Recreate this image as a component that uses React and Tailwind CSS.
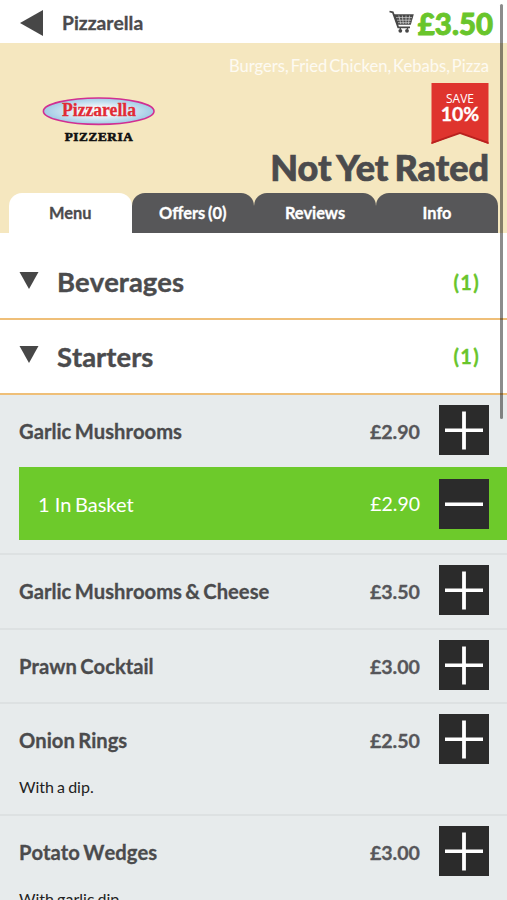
import React, { useState } from "react";

const tabs = [
  { name: "Menu", width: "w-[122.5px]" },
  { name: "Offers (0)", width: "w-[122.5px]" },
  { name: "Reviews", width: "w-[122px]" },
  { name: "Info", width: "w-[122px]" },
];

const starters = [
  { name: "Garlic Mushrooms", price: "£2.90", inBasket: 1 },
  { name: "Garlic Mushrooms & Cheese", price: "£3.50" },
  { name: "Prawn Cocktail", price: "£3.00" },
  { name: "Onion Rings", price: "£2.50", description: "With a dip." },
  { name: "Potato Wedges", price: "£3.00", description: "With garlic dip." },
];

const CartIcon = () => (
  <svg width="26" height="24" viewBox="0 0 26 24" fill="none">
    <path d="M0.5 1.5 L3.8 2.3 L9.2 17.3 H21" stroke="#474747" strokeWidth="1.8" />
    <path d="M4.6 4.3 H24.8 L21.8 14.8 H8.3 Z" fill="#474747" />
    <path
      d="M7 7.6 H23 M8 10.2 H22.3 M9 12.7 H21.5 M9.8 5.5 L11.8 14 M13.3 5.5 L14.3 14 M17 5.5 V14 M20.6 5.5 L19.4 14"
      stroke="#d8d8d8"
      strokeWidth="0.7"
    />
    <path d="M11.3 17 V19.5 M18.5 17 V19.5" stroke="#474747" strokeWidth="1.4" />
    <circle cx="11.3" cy="20.8" r="1.9" fill="#474747" />
    <circle cx="18" cy="20.8" r="1.9" fill="#474747" />
  </svg>
);

const Logo = () => (
  <svg width="114" height="48" viewBox="0 0 114 48">
    <defs>
      <radialGradient id="logoFill">
        <stop offset="0.3" stopColor="#f4f8fb" />
        <stop offset="1" stopColor="#9fcbe5" />
      </radialGradient>
    </defs>
    <ellipse cx="56.7" cy="14.2" rx="55.3" ry="13.2" fill="url(#logoFill)" stroke="#d12f92" strokeWidth="1.6" />
    <text
      x="57"
      y="19"
      textAnchor="middle"
      textLength="74"
      lengthAdjust="spacingAndGlyphs"
      className="font-['Liberation_Serif',serif] font-bold text-[18.5px]"
      fill="#e22b35"
      stroke="#e22b35"
      strokeWidth="0.3"
    >
      Pizzarella
    </text>
    <text
      x="56.7"
      y="44.3"
      textAnchor="middle"
      textLength="68"
      className="font-['Liberation_Serif',serif] font-bold text-[13.2px]"
      fill="#111"
      stroke="#111"
      strokeWidth="0.6"
    >
      PIZZERIA
    </text>
  </svg>
);

const SaveRibbon = () => (
  <div className="relative w-[58px] h-[61px]">
    <svg width="58" height="61" viewBox="0 0 58 61" className="block">
      <path d="M0.5 0 H57.5 V61 L29 50 L0.5 61 Z" fill="#df342e" />
      <path d="M0.5 59 L29 49 L57.5 59 V61 L29 51 L0.5 61 Z" fill="#b9221f" />
    </svg>
    <div className="absolute inset-x-0 top-[8px] text-center text-white">
      <div className="font-['Open_Sans',sans-serif] text-[12px] leading-[15px] font-medium">SAVE</div>
      <div className="text-[19.5px] leading-[16px] font-bold [-webkit-text-stroke:0.3px]">10%</div>
    </div>
  </div>
);

const SquareButton = ({ type, onClick }) => (
  <button onClick={onClick} aria-label={type} className="size-[50px] bg-[#2b2b2b] shrink-0">
    <svg width="50" height="50" viewBox="0 0 50 50">
      <path d="M6 25.2 H44" stroke="white" strokeWidth="3.4" />
      {type === "add" && <path d="M25 6.5 V44.5" stroke="white" strokeWidth="3.8" />}
    </svg>
  </button>
);

const CategoryRow = ({ name, count }) => (
  <div className="flex items-center h-[74.6px] border-b-2 border-[#efbf78] bg-white pl-[19px] pr-[27px] font-bold">
    <svg width="20" height="17" viewBox="0 0 20 17" className="-mt-[3px]">
      <path d="M0.5 0 H19.5 L10 17 Z" fill="#474747" />
    </svg>
    <h2 className="ml-[18px] grow text-[27.4px] [-webkit-text-stroke:0.4px] [font-kerning:none]">{name}</h2>
    <span className="text-[20px] tracking-[1.3px] text-[#69c52b] [-webkit-text-stroke:0.3px]">({count})</span>
  </div>
);

const MenuItem = ({ item }) => (
  <div className="border-t-2 border-[#dde1e2] first:border-t-0">
    <div className="flex items-start h-[72.6px] pt-[10px] pl-[19px] pr-[18px] text-[20px] leading-[53px] font-bold [-webkit-text-stroke:0.3px]">
      <h3 className="grow text-[20.2px] [font-kerning:none] [word-spacing:-1.5px]">{item.name}</h3>
      <span className="mr-[19px] text-[19.6px] text-[#56565a]">{item.price}</span>
      <SquareButton type="add" />
    </div>
    {item.inBasket && (
      <div className="flex items-center h-[73px] ml-[19px] mb-[12.6px] pl-[19px] pr-[18px] bg-[#6dca2b] text-white text-[20px]">
        <span className="grow">
          {item.inBasket} <span className="[word-spacing:-1.5px]">In Basket</span>
        </span>
        <span className="mr-[19px] text-[19.5px]">{item.price}</span>
        <SquareButton type="remove" />
      </div>
    )}
    {item.description && (
      <p className="h-[37.6px] pl-[19px] text-[16px] leading-[19px] text-[#222] [word-spacing:-1px]">
        {item.description}
      </p>
    )}
  </div>
);

const App = () => {
  const [activeTab, setActiveTab] = useState("Menu");

  return (
    <div className="relative w-[507px] h-[900px] overflow-hidden bg-white font-['Lato',sans-serif] text-[#4b4b4d]">
      <header className="flex items-center h-[43px] pl-[20px] pr-[14px]">
        <svg width="23" height="26" viewBox="0 0 23 26" className="mt-[2px]">
          <path d="M0 13 L23 0 V26 Z" fill="#474747" />
        </svg>
        <h1 className="ml-[19px] mt-[3px] grow text-[19.3px] font-bold [-webkit-text-stroke:0.3px] [font-kerning:none]">
          Pizzarella
        </h1>
        <CartIcon />
        <span className="ml-[3px] mt-[5px] text-[29.4px] font-black text-[#69c52b] [-webkit-text-stroke:0.9px]">
          £3.50
        </span>
      </header>

      <section className="h-[190px] bg-[#f5e7bf] flex flex-col">
        <div className="h-[40px] pt-[11px] pr-[18px] text-right text-[16.6px] leading-[24px] text-white/80 [word-spacing:-2.4px]">
          Burgers, Fried Chicken, Kebabs, Pizza
        </div>
        <div className="flex justify-between pl-[42px] pr-[18px] h-[61px]">
          <div className="pt-[14px]">
            <Logo />
          </div>
          <SaveRibbon />
        </div>
        <div className="h-[49px] pr-[18px] text-right text-[36px] leading-[47px] font-black [word-spacing:-2.5px] [-webkit-text-stroke:0.7px]">
          Not Yet Rated
        </div>
        <nav className="flex h-[40px] pl-[9px]">
          {tabs.map((tab) => (
            <button
              key={tab.name}
              onClick={() => setActiveTab(tab.name)}
              className={`${tab.width} h-[40px] rounded-t-[13px] text-[16.4px] font-bold [word-spacing:-1.2px] [-webkit-text-stroke:0.3px] ${
                activeTab === tab.name ? "bg-white" : "bg-[#575759] text-white"
              }`}
            >
              {tab.name}
            </button>
          ))}
        </nav>
      </section>

      <main className="pt-[12.6px]">
        <CategoryRow name="Beverages" count={1} />
        <CategoryRow name="Starters" count={1} />
        <div className="bg-[#e7ebec]">
          {starters.map((item) => (
            <MenuItem key={item.name} item={item} />
          ))}
        </div>
      </main>

      {/* Scroll indicator */}
      <div className="absolute top-[4px] right-[4px] w-[3px] h-[415px] rounded-full bg-black/45" />
    </div>
  );
};

export default App;
